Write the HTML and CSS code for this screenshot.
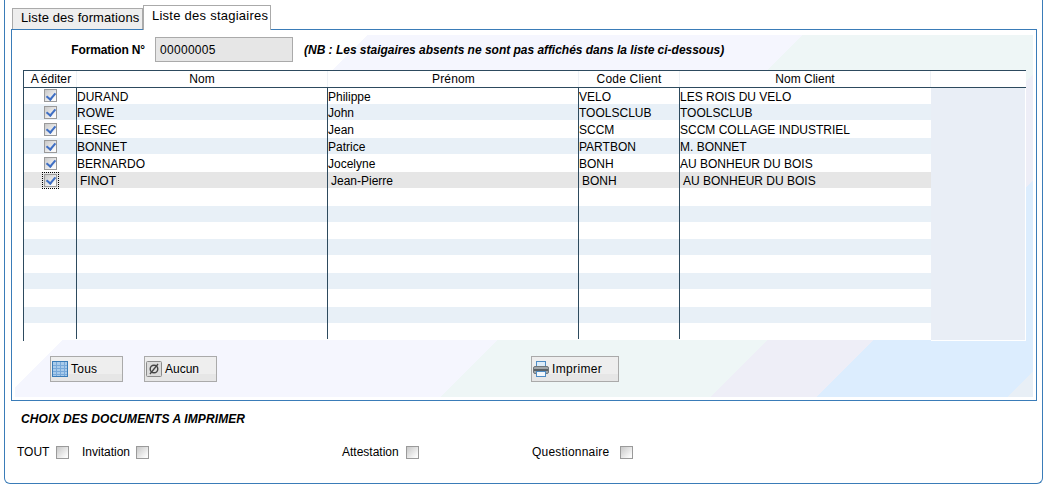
FILE: index.html
```html
<!DOCTYPE html>
<html lang="fr">
<head>
<meta charset="utf-8">
<title>Liste des stagiaires</title>
<link rel="stylesheet" href="styles.css">
</head>
<body>
<div class="frame">
  <div class="tabs">
    <div class="tab">Liste des formations</div>
    <div class="tab tab-active">Liste des stagiaires</div>
  </div>
  <div class="panel">
    <div class="panel-bg">
      <div class="formation">
        <span class="formation-label">Formation N°</span>
        <div class="field">00000005</div>
        <span class="note">(NB : Les staigaires absents ne sont pas affichés dans la liste ci-dessous)</span>
      </div>
      <div class="table">
        <div class="thead">
          <div class="c c1">A éditer</div>
          <div class="c c2">Nom</div>
          <div class="c c3">Prénom</div>
          <div class="c c4">Code Client</div>
          <div class="c c5">Nom Client</div>
        </div>
        <div class="tbody">
          <div class="rows">
            <div class="row"><div class="c c1"><span class="cb on"></span></div><div class="c c2">DURAND</div><div class="c c3">Philippe</div><div class="c c4">VELO</div><div class="c c5">LES ROIS DU VELO</div></div>
            <div class="row alt"><div class="c c1"><span class="cb on"></span></div><div class="c c2">ROWE</div><div class="c c3">John</div><div class="c c4">TOOLSCLUB</div><div class="c c5">TOOLSCLUB</div></div>
            <div class="row"><div class="c c1"><span class="cb on"></span></div><div class="c c2">LESEC</div><div class="c c3">Jean</div><div class="c c4">SCCM</div><div class="c c5">SCCM COLLAGE INDUSTRIEL</div></div>
            <div class="row alt"><div class="c c1"><span class="cb on"></span></div><div class="c c2">BONNET</div><div class="c c3">Patrice</div><div class="c c4">PARTBON</div><div class="c c5">M. BONNET</div></div>
            <div class="row"><div class="c c1"><span class="cb on"></span></div><div class="c c2">BERNARDO</div><div class="c c3">Jocelyne</div><div class="c c4">BONH</div><div class="c c5">AU BONHEUR DU BOIS</div></div>
            <div class="row sel"><div class="c c1"><span class="cb on focus"></span></div><div class="c c2">FINOT</div><div class="c c3">Jean-Pierre</div><div class="c c4">BONH</div><div class="c c5">AU BONHEUR DU BOIS</div></div>
            <div class="row"><div class="c c1"></div><div class="c c2"></div><div class="c c3"></div><div class="c c4"></div><div class="c c5"></div></div>
            <div class="row alt"><div class="c c1"></div><div class="c c2"></div><div class="c c3"></div><div class="c c4"></div><div class="c c5"></div></div>
            <div class="row"><div class="c c1"></div><div class="c c2"></div><div class="c c3"></div><div class="c c4"></div><div class="c c5"></div></div>
            <div class="row alt"><div class="c c1"></div><div class="c c2"></div><div class="c c3"></div><div class="c c4"></div><div class="c c5"></div></div>
            <div class="row"><div class="c c1"></div><div class="c c2"></div><div class="c c3"></div><div class="c c4"></div><div class="c c5"></div></div>
            <div class="row alt"><div class="c c1"></div><div class="c c2"></div><div class="c c3"></div><div class="c c4"></div><div class="c c5"></div></div>
            <div class="row"><div class="c c1"></div><div class="c c2"></div><div class="c c3"></div><div class="c c4"></div><div class="c c5"></div></div>
            <div class="row alt"><div class="c c1"></div><div class="c c2"></div><div class="c c3"></div><div class="c c4"></div><div class="c c5"></div></div>
            <div class="row"><div class="c c1"></div><div class="c c2"></div><div class="c c3"></div><div class="c c4"></div><div class="c c5"></div></div>
          </div>
          <div class="filler"></div>
        </div>
      </div>
      <div class="actions">
        <div class="btn btn-tous">
          <svg class="ico" viewBox="0 0 16 16"><rect x=".5" y=".5" width="15" height="15" fill="#a9cbea" stroke="#3a7cb8"/><path d="M1 4.5h14M1 7.5h14M1 10.5h14M1 13.5h14M4.5 1v14M8.5 1v14M12.5 1v14" stroke="#78a9da" fill="none"/></svg>
          <span class="lbl-tous">Tous</span>
        </div>
        <div class="btn btn-aucun">
          <svg class="ico" viewBox="0 0 16 16"><rect x=".5" y=".5" width="15" height="15" rx="1" fill="#dcdcdc" stroke="#8c8c8c"/><circle cx="8" cy="8" r="3.8" fill="none" stroke="#444" stroke-width="1.4"/><path d="M4 13 12 3" stroke="#444" stroke-width="1.3"/></svg>
          <span>Aucun</span>
        </div>
        <div class="btn btn-print">
          <svg class="ico" viewBox="0 0 16 16"><rect x="3.5" y=".5" width="9" height="6" fill="#dcecf9" stroke="#4f8cc4"/><rect x=".5" y="5.5" width="15" height="7" rx="1.5" fill="#a2a7aa" stroke="#70767a"/><rect x="1" y="8" width="14" height="2" fill="#5c6266"/><rect x="3.5" y="10.5" width="9" height="5" fill="#f2f7fc" stroke="#4f8cc4"/></svg>
          <span class="lbl-print">Imprimer</span>
        </div>
      </div>
    </div>
  </div>
  <h2 class="doc-title">CHOIX DES DOCUMENTS A IMPRIMER</h2>
  <div class="docs">
    <label class="doc doc-tout"><span class="doc-name">TOUT</span><span class="cb"></span></label>
    <label class="doc doc-inv"><span class="doc-name">Invitation</span><span class="cb"></span></label>
    <label class="doc doc-att"><span class="doc-name">Attestation</span><span class="cb"></span></label>
    <label class="doc doc-que"><span class="doc-name">Questionnaire</span><span class="cb"></span></label>
  </div>
</div>
</body>
</html>
```

FILE: styles.css
```css
* { box-sizing: border-box; }
html, body { margin: 0; padding: 0; background: #fff; }
body {
  width: 1043px;
  height: 484px;
  overflow: hidden;
  font-family: "Liberation Sans", Arial, sans-serif;
  font-size: 12px;
  color: #000;
}
.frame {
  margin-left: 4px;
  width: 1039px;
  height: 484px;
  border: 1px solid #3a7cb8;
  border-top: 0;
  border-radius: 0 0 6px 6px;
  padding: 5px 5px 0 6px;
}
.tabs { display: flex; align-items: flex-end; height: 24px; padding-left: 1px; position: relative; z-index: 1; }
.tab {
  width: 131px;
  height: 21px;
  background: #eeeeee;
  border: 1px solid #aaaaaa;
  border-bottom: 0;
  padding: 1px 0 0 8px;
  font-size: 13px;
  line-height: 16px;
  letter-spacing: .1px;
}
.tab-active {
  width: 128px;
  height: 25px;
  background: #fff;
  margin-bottom: -1px;
  padding: 2px 0 0 8px;
  letter-spacing: .25px;
}
.panel {
  width: 1026px;
  height: 372px;
  border: 1px solid #3a7cb8;
  padding: 5px 3px 3px;
}
.panel-bg {
  height: 100%;
  padding: 2px 8px 0;
  background: linear-gradient(135deg,
    #fff 249.6px, #f5f6fe 249.6px,
    #f5f6fe 556.5px, #eef6f6 556.5px,
    #eef6f6 748px, #eeeef7 748px,
    #eeeef7 823px, #dcedfe 823px,
    #dcedfe 958px, #e8eff6 958px);
}
.formation { display: flex; align-items: center; height: 25px; margin-bottom: 8px; }
.formation-label { width: 122px; text-align: right; font-weight: bold; letter-spacing: -.15px; }
.field {
  margin-left: 10px;
  width: 138px;
  height: 25px;
  background: #e6e6e6;
  border: 1px solid #aaaaaa;
  padding-left: 4px;
  line-height: 24px;
  letter-spacing: .3px;
}
.note { margin-left: 11px; font-weight: bold; font-style: italic; letter-spacing: -.015px; }
.table {
  width: 1003px;
  height: 271px;
  border-top: 1px solid #2d4a5e;
  border-left: 1px solid #2d4a5e;
}
.thead {
  display: flex;
  height: 17px;
  background: #fff;
  border-bottom: 1px solid #2d4a5e;
  line-height: 16px;
  text-align: center;
}
.thead .c { border-right: 1px solid #eef2f6; }
.thead .c1 { padding-left: 2px; word-spacing: -1px; letter-spacing: .1px; }
.thead .c3 { padding-left: 1px; letter-spacing: .15px; }
.thead .c4 { letter-spacing: .2px; }
.c { flex: none; height: 100%; border-right: 1px solid #2d4a5e; white-space: nowrap; overflow: hidden; }
.c1 { width: 53px; }
.c2 { width: 251px; }
.c3 { width: 251px; }
.c4 { width: 101px; }
.c5 { width: 251px; border-right: 0; }
.tbody { display: flex; height: 253px; }
.rows {
  width: 907px;
  height: 252px;
  padding-bottom: 1px;
  display: grid;
  grid-template-rows: 16px 17px 17px 17px 17px 17px 17px 16px 17px 17px 17px 17px 17px 17px 1fr;
  background: #fff;
}
.row { display: flex; align-items: stretch; line-height: 16px; background: #fff; }
.row .c2, .row .c3, .row .c4, .row .c5 { padding-top: 1px; }
.row.alt { background: linear-gradient(#e8f0f7 16px, #fff 16px); }
.row.sel { background: linear-gradient(#e6e6e6 16px, #fff 16px); }
.row .c1 { display: flex; justify-content: center; align-items: center; padding-bottom: 1px; }
.row.sel .c2, .row.sel .c3, .row.sel .c4, .row.sel .c5 { padding-left: 3px; }
.filler {
  flex: 1;
  height: 253px;
  background: #e9eef6;
  border-right: 1px solid #fff;
  border-bottom: 1px solid #fff;
}
.cb {
  display: inline-block;
  flex: none;
  position: relative;
  width: 13px;
  height: 13px;
  border: 1px solid #9a9a9a;
  background: linear-gradient(135deg, #c8c8c8, #fafafa 85%);
}
.cb.on::after {
  content: "";
  position: absolute;
  left: 3.5px;
  top: .5px;
  width: 4px;
  height: 7px;
  border: solid #3f6fc4;
  border-width: 0 2px 2px 0;
  transform: rotate(40deg);
}
.cb.focus { outline: 1px dotted #000; outline-offset: 1px; }
.actions { display: flex; margin-top: 15px; }
.btn {
  display: flex;
  align-items: center;
  gap: 3px;
  height: 26px;
  padding-left: 1px;
  border: 1px solid #aaaaaa;
  background: linear-gradient(#eeeeee 70%, #e6e6e6 70%);
}
.btn-tous { margin-left: 27px; width: 73px; }
.btn-aucun { margin-left: 21px; width: 73px; }
.btn-print { margin-left: 314px; width: 88px; }
.lbl-tous { letter-spacing: .25px; }
.lbl-print { letter-spacing: .35px; }
.ico { width: 16px; height: 16px; flex: none; }
.doc-title {
  margin: 11px 0 0 10px;
  font-size: 12px;
  line-height: 14px;
  font-style: italic;
  font-weight: bold;
  letter-spacing: .1px;
}
.docs { display: flex; margin-top: 19px; margin-left: 6px; align-items: center; }
.doc { display: flex; align-items: center; height: 14px; }
.doc-tout { width: 65px; }
.doc-tout .doc-name { width: 39px; }
.doc-inv { width: 260px; }
.doc-inv .doc-name { width: 54px; }
.doc-att { width: 190px; }
.doc-att .doc-name { width: 64px; }
.doc-que .doc-name { width: 88px; letter-spacing: .2px; }
```
